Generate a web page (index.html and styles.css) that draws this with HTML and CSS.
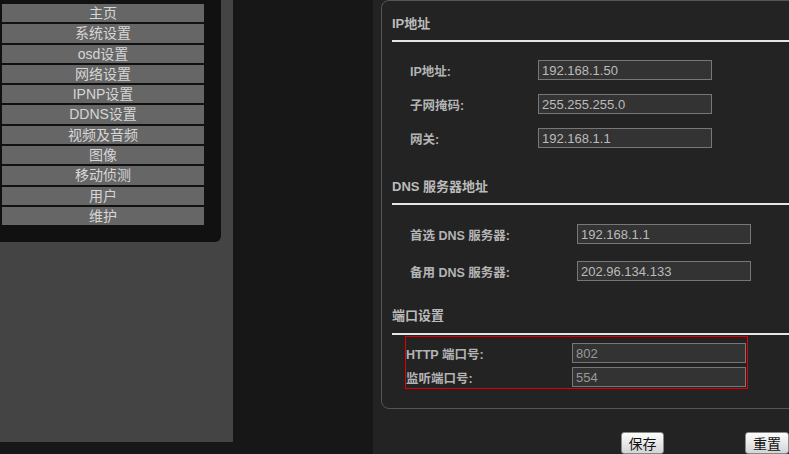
FILE: index.html
```html
<!DOCTYPE html>
<html lang="zh-CN">
<head>
  <meta charset="UTF-8" />
  <title>网络设置</title>
  <link rel="stylesheet" href="styles.css">
</head>
<body>

  <div class="sidebar">
    <div class="menu-box">
      <a class="menu-item" href="#">主页</a>
      <a class="menu-item" href="#">系统设置</a>
      <a class="menu-item" href="#">osd设置</a>
      <a class="menu-item" href="#">网络设置</a>
      <a class="menu-item" href="#">IPNP设置</a>
      <a class="menu-item" href="#">DDNS设置</a>
      <a class="menu-item" href="#">视频及音频</a>
      <a class="menu-item" href="#">图像</a>
      <a class="menu-item" href="#">移动侦测</a>
      <a class="menu-item" href="#">用户</a>
      <a class="menu-item" href="#">维护</a>
    </div>
  </div>

  <div class="main">
    <div class="panel">

      <h2 class="sec-title first">IP地址</h2>
      <div class="rule"></div>
      <div class="fields ip">
        <div class="row"><label>IP地址:</label><input type="text" value="192.168.1.50"></div>
        <div class="row"><label>子网掩码:</label><input type="text" value="255.255.255.0"></div>
        <div class="row"><label>网关:</label><input type="text" value="192.168.1.1"></div>
      </div>

      <h2 class="sec-title dns-title">DNS 服务器地址</h2>
      <div class="rule"></div>
      <div class="fields dns">
        <div class="row"><label>首选 DNS 服务器:</label><input type="text" value="192.168.1.1"></div>
        <div class="row"><label>备用 DNS 服务器:</label><input type="text" value="202.96.134.133"></div>
      </div>

      <h2 class="sec-title port-title">端口设置</h2>
      <div class="rule"></div>
      <div class="port-box">
        <div class="row"><label>HTTP 端口号:</label><input type="text" value="802"></div>
        <div class="row"><label>监听端口号:</label><input type="text" value="554"></div>
      </div>

    </div>

    <div class="actions">
      <button class="btn save">保存</button>
      <button class="btn reset">重置</button>
    </div>
  </div>

</body>
</html>
```

FILE: styles.css
```css
html, body {
  margin: 0;
  padding: 0;
}

body {
  background: #171717;
  width: 789px;
  height: 454px;
  overflow: hidden;
  display: flex;
  align-items: flex-start;
  font-family: "Liberation Sans", "Noto Sans CJK SC", sans-serif;
}

/* left menu */
.sidebar {
  width: 233px;
  height: 442px;
  background: #444;
  flex-shrink: 0;
}

.menu-box {
  width: 221px;
  height: 242px;
  box-sizing: border-box;
  background: #111;
  padding-top: 4px;
  border-bottom-right-radius: 6px;
}

.menu-item {
  display: block;
  width: 202px;
  height: 18.3px;
  line-height: 18px;
  margin: 0 0 2px 2px;
  background: #666;
  color: #d6d6d6;
  font-size: 14px;
  text-align: center;
  text-decoration: none;
}

/* right side */
.main {
  margin-left: 140px;
  width: 416px;
  height: 454px;
  background: #232323;
  flex-shrink: 0;
  overflow: hidden;
}

.panel {
  margin-left: 8px;
  width: 430px;
  height: 409px;
  box-sizing: border-box;
  border: 1px solid #555;
  border-radius: 8px;
  padding-left: 10px;
}

.sec-title {
  margin: 0;
  height: 16px;
  line-height: 16px;
  font-size: 13px;
  font-weight: bold;
  color: #bbb;
}

.sec-title.first { margin-top: 15px; }
.sec-title.dns-title { margin-top: 31px; }
.sec-title.port-title { margin-top: 27px; }

.rule {
  height: 2px;
  background: #e6e6e6;
  margin-top: 8px;
}

.port-title + .rule { margin-top: 9px; }

.fields {
  display: flex;
  flex-direction: column;
  padding-left: 18px;
}

.fields.ip {
  margin-top: 18px;
  gap: 14px;
}

.fields.dns {
  margin-top: 19px;
  gap: 17px;
}

.row {
  display: flex;
  align-items: center;
  height: 20px;
}

.row label {
  color: #b4b4b4;
  font-size: 12.5px;
  font-weight: bold;
  font-family: "Liberation Sans", "Noto Sans CJK SC", sans-serif;
}

.row input {
  box-sizing: border-box;
  width: 174px;
  height: 20px;
  padding: 0 3px;
  background: #333;
  border: 1px solid #777;
  color: #bbb;
  font-size: 13px;
  font-family: "Liberation Sans", sans-serif;
  margin: 0;
}

.ip label { width: 128px; }
.dns label { width: 167px; }

.port-box {
  margin: 1px 0 0 13px;
  width: 343px;
  box-sizing: border-box;
  border: 1px solid #e00000;
  padding: 6px 0 1px 0;
  display: flex;
  flex-direction: column;
  gap: 4px;
}

.port-box label { width: 166px; }
.port-box input { color: #999; }

/* buttons */
.actions {
  display: flex;
  gap: 81px;
  padding: 23px 0 0 248px;
}

.btn {
  height: 22px;
  padding: 0;
  background: linear-gradient(#fdfdfd, #d4d4d4);
  border: 1px solid #888;
  border-radius: 3px;
  color: #111;
  font-size: 14px;
  font-family: "Noto Sans CJK SC", sans-serif;
  line-height: 18px;
  cursor: pointer;
}

.btn.save { width: 43px; }
.btn.reset { width: 44px; flex-shrink: 0; }
```
